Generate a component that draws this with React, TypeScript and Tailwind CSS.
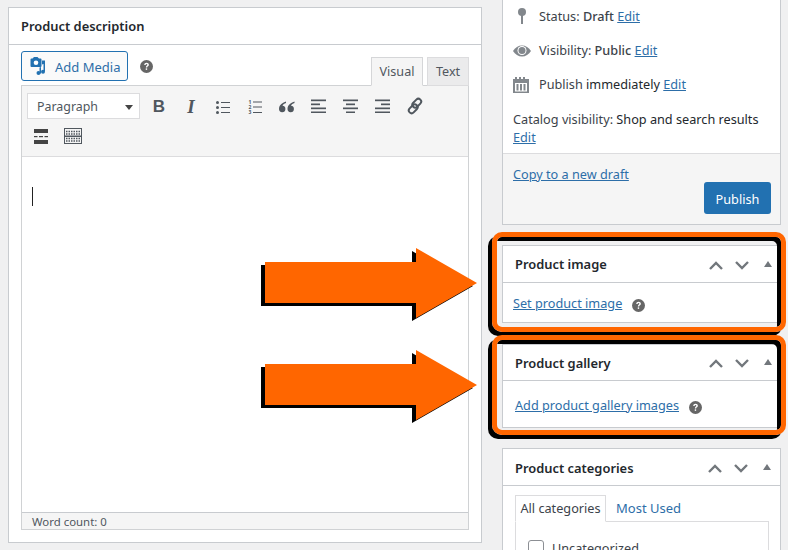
const font = { fontFamily: '"Noto Sans", sans-serif' };

function Help({ className = "" }: { className?: string }) {
  return (
    <svg viewBox="0 0 12 12" className={`w-[13px] h-[13px] shrink-0 ${className}`}>
      <circle cx="6" cy="6" r="6" fill="#666" />
      <path d="M3.900 4.600c0-1.300 1-2.100 2.200-2.100s2.100.8 2.100 1.800c0 1.500-1.600 1.400-1.600 2.700H5.400c0-1.900 1.400-1.800 1.400-2.600 0-.4-.3-.7-.8-.7s-.8.4-.8.9z" fill="#fff" />
      <rect x="5.300" y="7.700" width="1.300" height="1.400" fill="#fff" />
    </svg>
  );
}

function Ctrls() {
  return (
    <div className="flex items-center ml-auto pr-[9px]">
      <svg viewBox="0 0 14 9" className="w-[14px] h-[9px] mr-3"><path d="M1 8l6-6 6 6" fill="none" stroke="#72777c" strokeWidth="2.4" /></svg>
      <svg viewBox="0 0 14 9" className="w-[14px] h-[9px] mr-[15px]"><path d="M1 1l6 6 6-6" fill="none" stroke="#72777c" strokeWidth="2.4" /></svg>
      <svg viewBox="0 0 8 6" className="w-2 h-[6px] mb-[3px]"><path d="M4 0l4 6H0z" fill="#72777c" /></svg>
    </div>
  );
}

function Tool({ children }: { children: React.ReactNode }) {
  return <div className="w-8 h-[26px] flex items-center justify-center shrink-0">{children}</div>;
}

const ink = "#50575e";

function Lines({ rows }: { rows: [number, number][] }) {
  return (
    <svg viewBox="0 0 16 14" className="w-4 h-[14px]">
      {rows.map(([x, w], i) => (
        <rect key={i} x={x} y={i * 4 + 0.5} width={w} height="1.7" fill={ink} />
      ))}
    </svg>
  );
}

function Arrow() {
  const pts = (dx: number, dy: number) =>
    [[4, 14], [155, 14], [155, 0], [216, 35], [155, 70], [155, 55], [4, 55]]
      .map(([x, y]) => `${x + dx},${y + dy}`)
      .join(" ");
  return (
    <svg viewBox="0 0 220 80" className="w-[220px] h-20">
      <polygon points={pts(-4, 3)} fill="#000" />
      <polygon points={pts(0, 0)} fill="#ff6600" />
    </svg>
  );
}

function Edit() {
  return <a className="text-[#2d6ea8] underline">Edit</a>;
}

export default function App() {
  return (
    <div style={font} className="relative w-[788px] h-[550px] overflow-hidden bg-[#f0f0f1] flex items-start text-[12.7px] text-[#3c434a]">
      <div className="w-[474px] h-[536px] ml-2 mt-[7px] shrink-0 bg-white border border-[#c8cbcf] flex flex-col">
        <div className="h-[37px] shrink-0 border-b border-[#c8cbcf] flex items-center pl-3 pt-[2px] text-[12.9px] font-semibold text-[#23282d]">Product description</div>
        <div className="px-3 flex-1 flex flex-col pb-3">
          <div className="h-[40px] shrink-0 flex items-start pt-[6px] relative">
            <div className="w-[107px] h-[30px] border border-[#2271b1] rounded-[3px] bg-[#fafafa] flex items-center pl-2 pt-[3px] text-[#2d6ea8] text-[13px]">
              <svg viewBox="0 0 16 18" className="w-4 h-[18px] mr-[9px] mb-[3px]">
                <path d="M2.500 1.500L4 0h3.500L9 1.500h1.500a1 1 0 0 1 1 1V9a1 1 0 0 1-1 1h-9a1 1 0 0 1-1-1V2.500a1 1 0 0 1 1-1z" fill="#2271b1" />
                <circle cx="6" cy="5.700" r="2.300" fill="#fff" />
                <path d="M15 3.500v11h-1.500V7l-1.500.4V3.500zM9.500 10.500L11 10v6.500H9.500z" fill="#2271b1" />
                <circle cx="13" cy="14.800" r="2" fill="#2271b1" /><circle cx="8.500" cy="16" r="2" fill="#2271b1" />
              </svg>
              Add Media
            </div>
            <Help className="ml-3 mt-[9px]" />
            <div className="absolute right-0 bottom-[-1px] flex items-end text-[12.6px]">
              <div className="w-[52px] h-[29px] pt-[2px] bg-[#f5f5f5] border border-[#d5d6d8] border-b-[#f5f5f5] flex items-center justify-center text-[#50575e] relative z-10">Visual</div>
              <div className="w-[42px] h-[29px] pt-[2px] ml-[4px] bg-[#ebebec] border border-[#dcdcde] flex items-center justify-center text-[#50575e]">Text</div>
            </div>
          </div>
          <div className="flex-1 border border-[#d0d2d4] flex flex-col">
            <div className="h-[71px] shrink-0 bg-[#f5f5f5] border-b border-[#dcdcde] pl-[5px] pt-[7px]">
              <div className="flex items-center">
                <div className="w-[113px] h-[26px] bg-white border border-[#dcdcde] flex items-center pl-[9px] pr-[6px] pt-[2px] mr-[3px] text-[12.4px] text-[#50575e]">
                  Paragraph
                  <svg viewBox="0 0 8 5" className="w-2 h-[5px] ml-auto"><path d="M0 0h8L4 5z" fill="#444" /></svg>
                </div>
                <Tool><span style={{ fontFamily: '"Liberation Sans", sans-serif' }} className="font-bold text-[17px] text-[#50575e] pt-[2px]">B</span></Tool>
                <Tool><span style={{ fontFamily: '"Liberation Serif", serif' }} className="font-bold italic text-[19px] text-[#50575e] pt-[2px]">I</span></Tool>
                <Tool>
                  <svg viewBox="0 0 14 13" className="w-[14px] h-[13px] mt-[2px]">
                    {[1.5, 6.500, 11.500].map((y) => (
                      <g key={y}><circle cx="1.500" cy={y} r="1.500" fill={ink} /><rect x="5" y={y - 0.5} width="9" height="1" fill={ink} /></g>
                    ))}
                  </svg>
                </Tool>
                <Tool>
                  <svg viewBox="0 0 14 15" className="w-[14px] h-[15px] mt-[2px]">
                    {["1", "2", "3"].map((n, i) => (
                      <text key={n} x="0.500" y={4 + i * 5.200} fontSize="5" fontWeight="700" fill={ink}>{n}</text>
                    ))}
                    {[2, 7, 12.500].map((y) => (
                      <rect key={y} x="5" y={y - 0.5} width="9" height="1" fill={ink} />
                    ))}
                  </svg>
                </Tool>
                <Tool>
                  <svg viewBox="0 0 16 12" className="w-4 h-3 mt-[1px]">
                    <path d="M7 .5C4 1.500 0 3.500 0 8a3.200 3.200 0 1 0 3.500-3.200C4 3.300 5.500 2.500 7 2.100zM15.500.5c-3 1-7 3-7 7.500a3.200 3.200 0 1 0 3.500-3.200c.5-1.500 2-2.300 3.500-2.700z" fill={ink} />
                  </svg>
                </Tool>
                <Tool><Lines rows={[[0, 15], [0, 9], [0, 15], [0, 15]]} /></Tool>
                <Tool><Lines rows={[[0, 15], [3, 9], [0, 15], [3, 9]]} /></Tool>
                <Tool><Lines rows={[[0, 15], [6, 9], [0, 15], [0, 15]]} /></Tool>
                <Tool>
                  <svg viewBox="0 0 18 18" className="w-[18px] h-[18px]" fill="none" stroke={ink} strokeWidth="2">
                    <rect x="0.800" y="6.200" width="10" height="5.600" rx="2.800" transform="rotate(-45 5.800 9) translate(-1 3)" />
                    <rect x="7.200" y="6.200" width="10" height="5.600" rx="2.800" transform="rotate(-45 12.200 9) translate(1 -3)" />
                  </svg>
                </Tool>
              </div>
              <div className="flex items-center mt-[4px] ml-[-2px]">
                <Tool>
                  <svg viewBox="0 0 14 15" className="w-[14px] h-[15px]">
                    <rect y="0" width="14" height="4" fill="#444" /><rect y="11" width="14" height="4" fill="#444" />
                    <rect x="0" y="7" width="3.500" height="1.200" fill="#444" /><rect x="5" y="7" width="4" height="1.200" fill="#444" /><rect x="10.500" y="7" width="3.500" height="1.200" fill="#444" />
                  </svg>
                </Tool>
                <Tool>
                  <svg viewBox="0 0 18 16" className="w-[18px] h-4" fill="none" stroke="#50575e">
                    <rect x="0.500" y="0.500" width="17" height="15" />
                    <path d="M2 3.500h14M2 6h14" strokeDasharray="1.500 1" strokeWidth="1.300" />
                    <rect x="0.500" y="8" width="17" height="0.500" />
                    <path d="M2 10.500h14M2 13h14" strokeDasharray="1.500 1" strokeWidth="1.300" />
                  </svg>
                </Tool>
              </div>
            </div>
            <div className="flex-1 bg-white pl-[10px] pt-[30px]">
              <div className="w-px h-[19px] bg-[#222]" />
            </div>
            <div className="h-[17px] shrink-0 bg-[#f5f5f5] border-t border-[#c8cbcf] pl-[10px] text-[11.4px] leading-[17px] text-[#50575e]">Word count: 0</div>
          </div>
        </div>
      </div>

      <div className="w-[279px] ml-5 shrink-0 flex flex-col">
        <div className="h-[225px] shrink-0 bg-white border-x border-b border-[#c8cbcf] flex flex-col">
          <div className="flex-1 px-[10px]">
            <div className="h-[34px] flex items-center">
              <svg viewBox="0 0 10 16" className="w-[10px] h-4 ml-[4px] mr-[12px] mb-[2px]"><circle cx="5" cy="4" r="4" fill="#82878c" /><rect x="4" y="7" width="2" height="9" fill="#82878c" /></svg>
              <span className="whitespace-pre">Status: <span className="font-medium">Draft</span> <Edit /></span>
            </div>
            <div className="h-[34px] flex items-center">
              <svg viewBox="0 0 18 12" className="w-[18px] h-3 mr-[8px]"><path d="M0 6c2-3.500 5.500-5.500 9-5.500S16 2.500 18 6c-2 3.500-5.500 5.500-9 5.500S2 9.500 0 6z" fill="#82878c" /><circle cx="9" cy="5.500" r="4.500" fill="#fff" /><circle cx="9" cy="5.500" r="3.500" fill="#82878c" /></svg>
              <span className="whitespace-pre">Visibility: <span className="font-medium">Public</span> <Edit /></span>
            </div>
            <div className="h-[34px] flex items-center">
              <svg viewBox="0 0 16 16" className="w-4 h-4 mr-[10px]"><path d="M0 2h2V0h2v2h2V0h2v2h2V0h2v2h4v14H0zM2 6v8.500h12V6z" fill="#82878c" /><rect x="3.500" y="7" width="2" height="6.500" fill="#82878c" /><rect x="7" y="7" width="2" height="6.500" fill="#82878c" /><rect x="10.500" y="7" width="2" height="6.500" fill="#82878c" /></svg>
              <span className="whitespace-pre">Publish <span className="text-[#23282d]">immediately</span> <Edit /></span>
            </div>
            <div className="mt-[8px] leading-[18px] whitespace-pre">
              Catalog visibility: <span className="text-[#23282d]">Shop and search results</span>
              <br />
              <Edit />
            </div>
          </div>
          <div className="h-[71px] shrink-0 bg-[#f5f5f5] border-t border-[#dcdcde] pl-[10px] pr-[9px] pt-[11px] relative flex flex-col">
            <a className="text-[#2d6ea8] underline leading-[18px]">Copy to a new draft</a>
            <div className="self-end mt-[-1px] w-[67px] h-[32px] rounded-[3px] bg-[#2271b1] text-white flex items-center justify-center pt-[3px]">Publish</div>
          </div>
        </div>

        <div className="relative mt-[20px] h-[78px] bg-white border border-[#c8cbcf] border-r-0">
          <div className="h-[37px] border-b border-[#c8cbcf] flex items-center pl-3 pt-[2px] text-[12.9px] font-semibold text-[#23282d]">
            Product image<Ctrls />
          </div>
          <div className="flex items-center pl-[10px] pt-[11px]">
            <a className="text-[#2d6ea8] underline">Set product image</a>
            <Help className="ml-[10px] mt-[3px]" />
          </div>
          <div className="absolute left-[-11px] right-[-5px] top-[-14px] bottom-[-10px] border-[5px] border-[#ff6600] rounded-[10px] shadow-[-4px_4px_0_0_#000,inset_-4px_4px_0_0_#000]" />
        </div>

        <div className="relative mt-[21px] h-[84px] bg-white border border-[#c8cbcf] border-r-0">
          <div className="h-[36px] border-b border-[#c8cbcf] flex items-center pl-3 pt-[2px] text-[12.9px] font-semibold text-[#23282d]">
            Product gallery<Ctrls />
          </div>
          <div className="flex items-center pl-3 pt-[15px]">
            <a className="text-[#2d6ea8] underline">Add product gallery images</a>
            <Help className="ml-[10px] mt-[3px]" />
          </div>
          <div className="absolute left-[-11px] right-[-5px] top-[-10px] bottom-[-8px] border-[5px] border-[#ff6600] rounded-[10px] shadow-[-4px_4px_0_0_#000,inset_-4px_4px_0_0_#000]" />
        </div>

        <div className="mt-[20px] h-[200px] bg-white border border-[#c8cbcf]">
          <div className="h-[37px] border-b border-[#c8cbcf] flex items-center pl-3 pt-[3px] text-[12.9px] font-semibold text-[#23282d]">
            Product categories<Ctrls />
          </div>
          <div className="px-3 pt-[9px]">
            <div className="flex items-end">
              <div className="relative z-10 w-[91px] h-[27px] border border-[#dcdcde] border-b-white flex items-center justify-center mb-[-1px] bg-white">All categories</div>
              <div className="ml-[10px] h-[26px] pt-[2px] flex items-center text-[#2d6ea8] text-[13px]">Most Used</div>
            </div>
            <div className="border border-[#dcdcde] w-[254px] h-[80px] pl-3 pt-[18px] flex items-start">
              <div className="w-4 h-4 border border-[#8c8f94] rounded-[3px] mr-2 shrink-0" />
              <span className="leading-[16px]">Uncategorized</span>
            </div>
          </div>
        </div>
      </div>

      <div className="absolute left-[261px] top-[248px]"><Arrow /></div>
      <div className="absolute left-[261px] top-[350px]"><Arrow /></div>
    </div>
  );
}
